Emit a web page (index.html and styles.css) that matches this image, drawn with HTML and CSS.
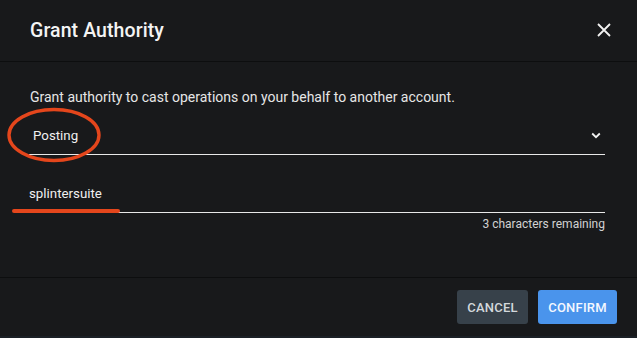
FILE: index.html
```html
<!DOCTYPE html>
<html>
<head>
<meta charset="utf-8">
<link rel="stylesheet" href="styles.css">
</head>
<body>
<div class="dialog">
  <div class="header">
    <h1 class="title">Grant Authority</h1>
    <button class="close" aria-label="Close">
      <svg width="14" height="14" viewBox="0 0 14 14"><path d="M1 1 L13 13 M13 1 L1 13" stroke="#f2f2f2" stroke-width="1.8" fill="none"/></svg>
    </button>
  </div>
  <div class="content">
    <p class="desc">Grant authority to cast operations on your behalf to another account.</p>
    <div class="select">
      <span class="select-value">Posting</span>
      <svg class="chev" width="10" height="7" viewBox="0 0 10 7"><path d="M1.2 1.5 L5 5.2 L8.8 1.5" stroke="#f2f2f2" stroke-width="1.8" fill="none"/></svg>
    </div>
    <div class="field">
      <span class="field-value">splintersuite</span>
    </div>
    <div class="helper">3 characters remaining</div>
  </div>
  <div class="footer">
    <button class="btn btn-cancel">CANCEL</button>
    <button class="btn btn-confirm">CONFIRM</button>
  </div>
  <div class="bottom-strip"></div>
  <svg class="mark-ellipse" width="100" height="62" viewBox="0 0 100 62"><ellipse cx="49" cy="29" rx="45" ry="25.5" stroke="#e4461c" stroke-width="3.4" fill="none"/></svg>
  <div class="mark-line"></div>
</div>
</body>
</html>
```
FILE: styles.css
```css
* { box-sizing: border-box; }
html, body { margin: 0; padding: 0; background: #18191b; }
body { font-family: Roboto, "Noto Sans", Arial, sans-serif; color: #ececec; }
.dialog { position: relative; width: 637px; height: 338px; background: #18191b; display: flex; flex-direction: column; overflow: hidden; }
.header { height: 62px; display: flex; align-items: center; justify-content: space-between; padding: 0 26px 1px 30px; border-bottom: 1px solid #0d0e0f; }
.title { margin: 0; font-size: 19.5px; font-weight: 500; color: #f4f4f4; letter-spacing: 0.1px; }
.close { background: none; border: 0; padding: 0; width: 14px; height: 14px; display: flex; cursor: pointer; }
.content { padding: 0 32px 0 29px; height: 215px; display: flex; flex-direction: column; }
.desc { margin: 25px 0 0 1px; font-size: 14px; line-height: 20px; color: #e6e6e6; }
.select { margin-top: 10px; height: 38px; border-bottom: 1px solid #e8e8e8; display: flex; align-items: center; justify-content: space-between; padding: 0 4px 1px 4px; }
.select-value { font-size: 13.3px; color: #f0f0f0; }
.chev { margin-right: 0; }
.field { margin-top: 20px; height: 38px; border-bottom: 1px solid #e8e8e8; display: flex; align-items: center; padding-bottom: 1px; }
.field-value { font-size: 13.3px; color: #f0f0f0; }
.helper { margin-top: 4px; text-align: right; font-size: 12px; line-height: 14px; color: #d2d2d2; }
.footer { height: 59px; border-top: 1px solid #0d0e0f; display: flex; justify-content: flex-end; align-items: flex-start; gap: 10px; padding: 12px 20px 0 0; }
.btn { height: 34px; border: 0; border-radius: 3px; font-family: Roboto, Arial, sans-serif; font-size: 13px; font-weight: 500; letter-spacing: 0.2px; padding: 0; cursor: pointer; }
.btn-cancel { width: 71px; background: #37414a; color: #d3d8dc; }
.btn-confirm { width: 79px; background: #4a94ec; color: #f4f8ff; }
.bottom-strip { height: 2px; background: #1b2026; }
.mark-ellipse { position: absolute; left: 5px; top: 106px; }
.mark-line { position: absolute; left: 12px; top: 209px; width: 108px; height: 4px; border-radius: 2px; background: #e4461c; }
```
